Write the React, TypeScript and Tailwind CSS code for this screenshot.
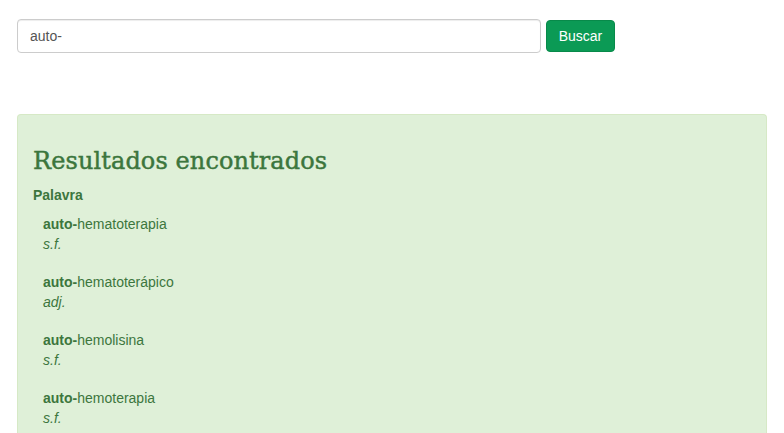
const results = [
  ["hematoterapia", "s.f."],
  ["hematoterápico", "adj."],
  ["hemolisina", "s.f."],
  ["hemoterapia", "s.f."],
] as const;

export default function App() {
  return (
    <div className="min-h-screen bg-white px-[17px] pt-[19px] font-['Liberation_Sans',Arial,sans-serif] text-[14px] leading-[20px]">
      <form className="flex items-start gap-[5px]" onSubmit={(e) => e.preventDefault()}>
        <input
          type="text"
          defaultValue="auto-"
          className="h-[34px] w-[524px] rounded-[4px] border border-[#cccccc] px-[12px] text-[14px] text-[#555555] shadow-[inset_0_1px_1px_rgba(0,0,0,0.075)] outline-none"
        />
        <button
          type="submit"
          className="mt-px h-[32px] w-[69px] rounded-[4px] border border-[#088a4a] bg-[#0b9a55] text-[14px] text-white"
        >
          Buscar
        </button>
      </form>

      <div className="mt-[61px] w-[750px] rounded-t-[4px] border border-b-0 border-[#d6e9c6] bg-[#dff0d8] px-[15px] pt-[32px] pb-[20px] text-[#3c763d]">
        <h2 className="font-['DejaVu_Serif',serif] text-[24px] leading-[28px] tracking-[0.1px] text-[#3c763d] [-webkit-text-stroke:0.45px_#3c763d]">
          Resultados encontrados
        </h2>
        <div className="mt-[10px] font-bold">Palavra</div>
        <ul className="mt-[9px] pl-[10px]">
          {results.map(([word, cls]) => (
            <li key={word} className="mb-[18px]">
              <div>
                <b>auto-</b>
                {word}
              </div>
              <div className="italic">{cls}</div>
            </li>
          ))}
        </ul>
      </div>
    </div>
  );
}
